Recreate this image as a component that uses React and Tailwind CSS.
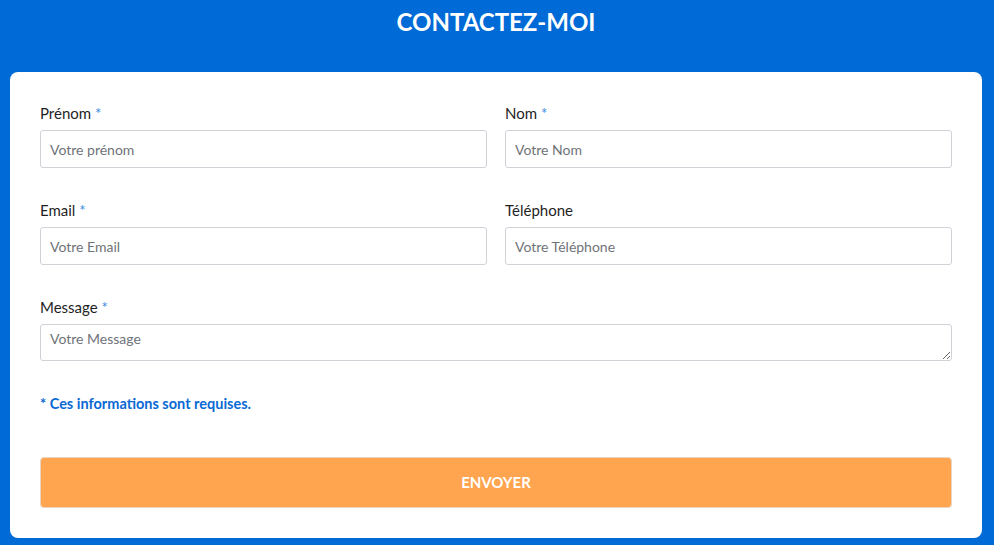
import React from 'react';

/* ── Field ─────────────────────────────────────────────────────────────── */
const Field = ({ label, placeholder, required = false, type = 'text' }) => (
  <div className="flex flex-col">
    <label className="text-[15px] leading-5 text-[#1f1f1f] pt-px">
      {label}
      {required && <span className="text-[#3a8ee0]"> *</span>}
    </label>
    <input
      type={type}
      placeholder={placeholder}
      className="mt-[7px] h-[38px] w-full rounded-[3px] border border-[#cfd3d8] bg-white px-[9px] text-[14px] text-[#333] placeholder:text-[#6f7378] outline-none"
    />
  </div>
);

/* ── App ───────────────────────────────────────────────────────────────── */
const App = () => {
  return (
    <div
      className="min-h-screen bg-[#006ad6] pl-[10px] pr-[12px] pb-[7px]"
      style={{ fontFamily: 'Lato, "Noto Sans", sans-serif' }}
    >
      <h1 className="h-[72px] pt-[6px] text-center text-[24px] font-bold leading-8 text-white">
        CONTACTEZ-MOI
      </h1>

      <form className="rounded-[8px] bg-white px-[30px] pt-[30px] pb-[30px]" onSubmit={e => e.preventDefault()}>
        <div className="grid grid-cols-2 gap-x-[18px] gap-y-[31px]">
          <Field label="Prénom" placeholder="Votre prénom" required />
          <Field label="Nom" placeholder="Votre Nom" required />
          <Field label="Email" placeholder="Votre Email" required type="email" />
          <Field label="Téléphone" placeholder="Votre Téléphone" />
        </div>

        <div className="mt-[31px] flex flex-col">
          <label className="text-[15px] leading-5 text-[#1f1f1f] pt-px">
            Message<span className="text-[#3a8ee0]"> *</span>
          </label>
          <textarea
            placeholder="Votre Message"
            className="mt-[7px] block h-[37px] w-full resize-y rounded-[3px] border border-[#cfd3d8] bg-white px-[9px] pt-[4px] text-[14px] leading-5 text-[#333] placeholder:text-[#6f7378] outline-none"
          />
        </div>

        <p className="mt-[33px] text-[14.5px] font-bold leading-5 text-[#0a69d4]">
          * Ces informations sont requises.
        </p>

        <button
          type="submit"
          className="mt-[43px] block h-[51px] w-full rounded-[4px] border border-[#e9d5c2] bg-[#ffa54f] text-[15px] font-bold text-white"
        >
          ENVOYER
        </button>
      </form>
    </div>
  );
};

export default App;
